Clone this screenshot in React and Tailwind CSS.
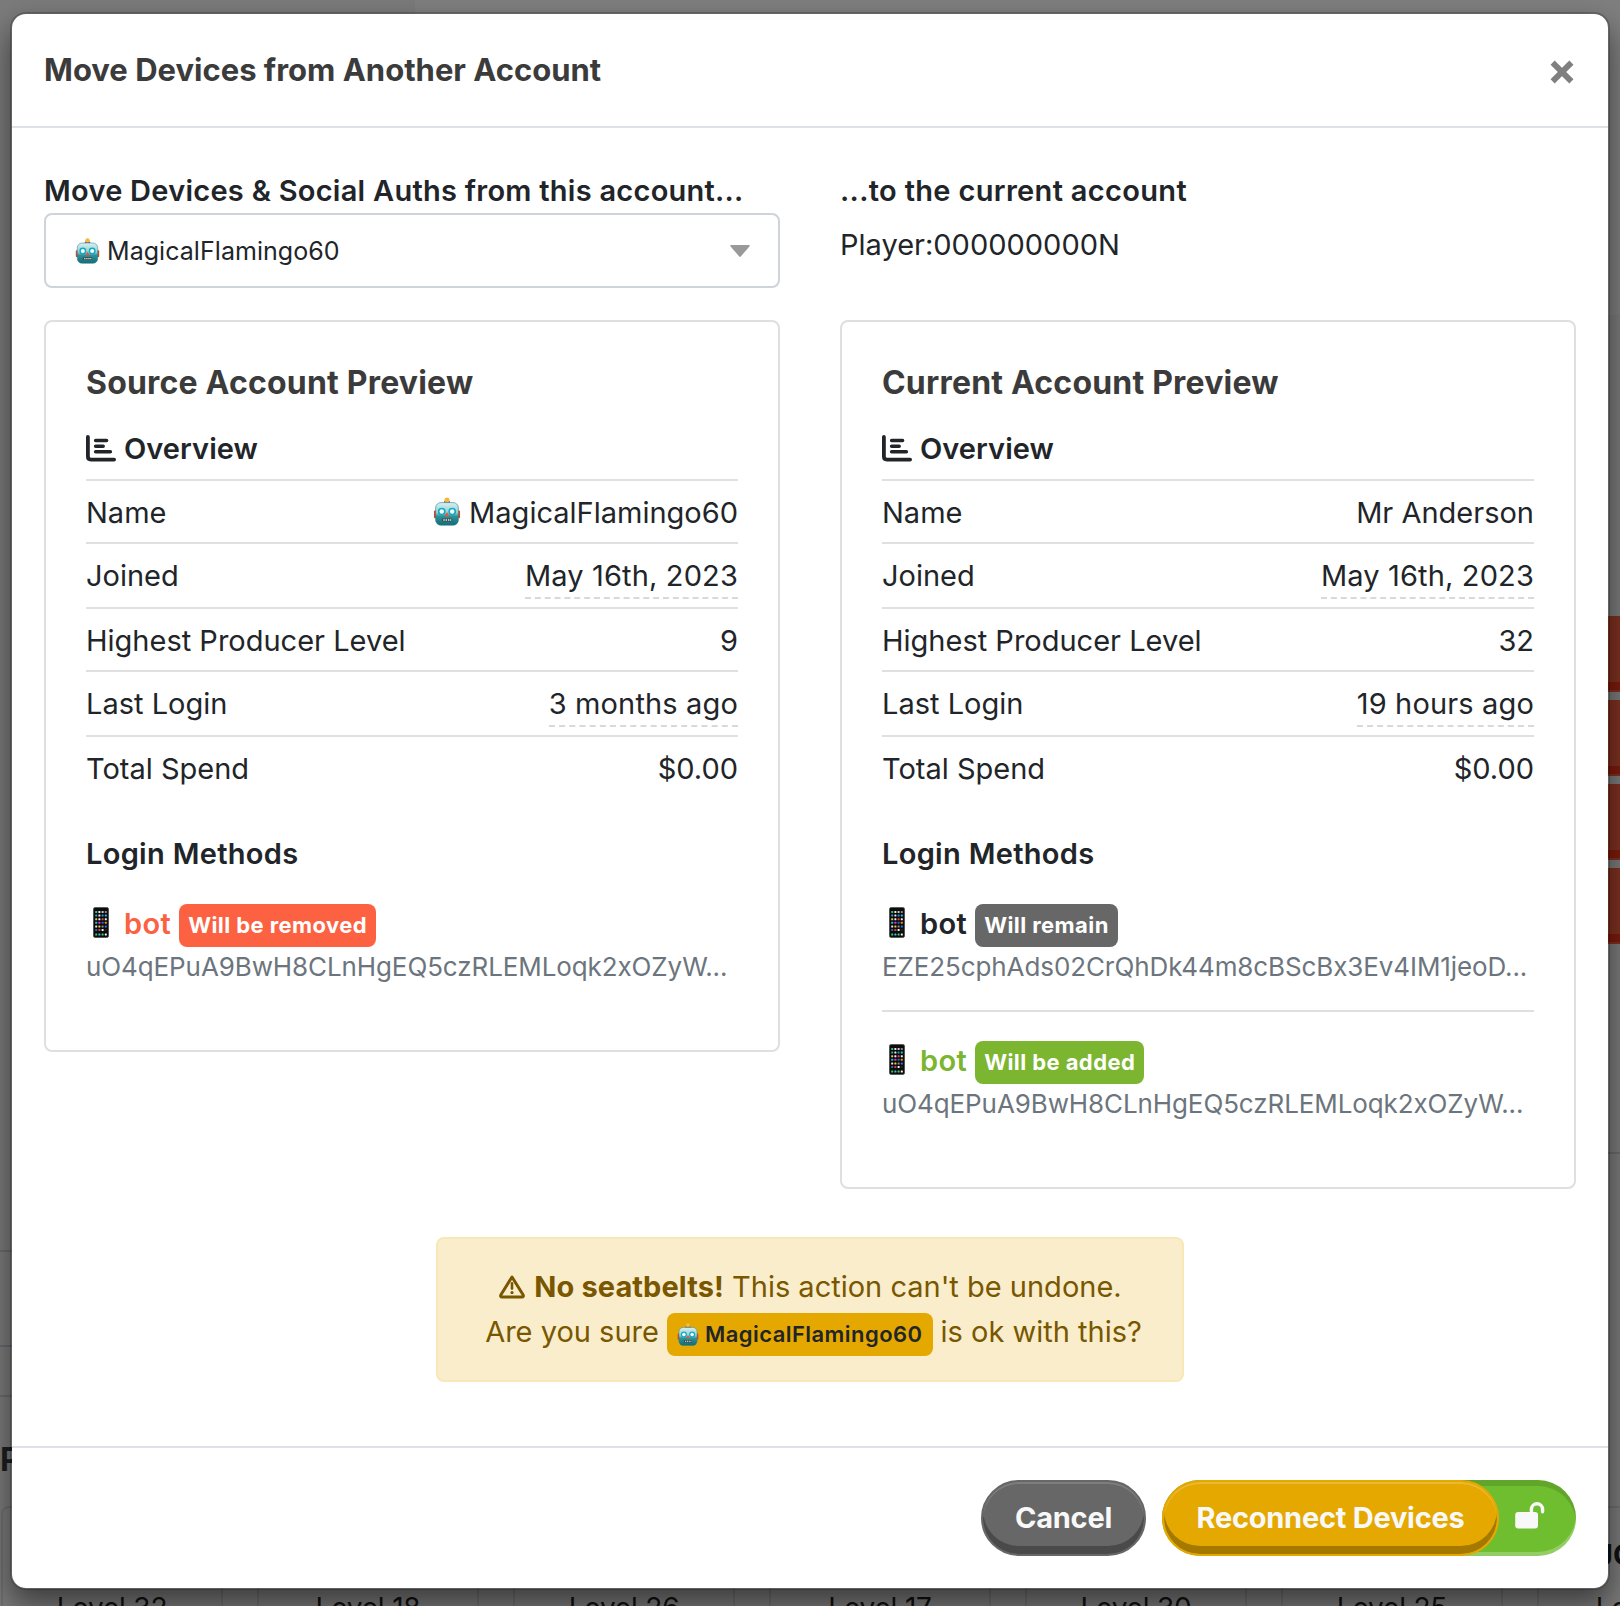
const LEVELS = [32, 18, 26, 17, 30, 25, 21];

const REMOVE_BUTTONS = [0, 1, 2, 3];

const sourceAccount = {
  title: "Source Account Preview",
  rows: [
    { label: "Name", value: "MagicalFlamingo60", robot: true },
    { label: "Joined", value: "May 16th, 2023", dashed: true },
    { label: "Highest Producer Level", value: "9" },
    { label: "Last Login", value: "3 months ago", dashed: true },
    { label: "Total Spend", value: "$0.00" },
  ],
  methods: [
    {
      name: "bot",
      status: "Will be removed",
      text: "text-[#fc6142]",
      badge: "bg-[#fc6142]",
      token: "uO4qEPuA9BwH8CLnHgEQ5czRLEMLoqk2xOZyW...",
    },
  ],
};

const currentAccount = {
  title: "Current Account Preview",
  rows: [
    { label: "Name", value: "Mr Anderson" },
    { label: "Joined", value: "May 16th, 2023", dashed: true },
    { label: "Highest Producer Level", value: "32" },
    { label: "Last Login", value: "19 hours ago", dashed: true },
    { label: "Total Spend", value: "$0.00" },
  ],
  methods: [
    {
      name: "bot",
      status: "Will remain",
      text: "text-[#212529]",
      badge: "bg-[#676767]",
      token: "EZE25cphAds02CrQhDk44m8cBScBx3Ev4IM1jeoD...",
    },
    {
      name: "bot",
      status: "Will be added",
      text: "text-[#7cb52f]",
      badge: "bg-[#7cb52f]",
      token: "uO4qEPuA9BwH8CLnHgEQ5czRLEMLoqk2xOZyW...",
    },
  ],
};

function Robot({ className }) {
  return (
    <svg viewBox="0 0 28 30" className={className}>
      <defs>
        <linearGradient id="head" x1="0" y1="0" x2="0" y2="1">
          <stop offset="0" stopColor="#d9f1f2" />
          <stop offset="0.45" stopColor="#8fcfd3" />
          <stop offset="0.6" stopColor="#2f9299" />
          <stop offset="1" stopColor="#0f6d77" />
        </linearGradient>
      </defs>
      <rect x="0.5" y="14" width="3" height="8" rx="1" fill="#d8412c" />
      <rect x="24.5" y="14" width="3" height="8" rx="1" fill="#d8412c" />
      <rect x="11" y="4" width="6" height="3" rx="1" fill="#6d4a7c" />
      <circle cx="14" cy="3" r="2.6" fill="#f6b83c" />
      <rect x="2.2" y="5.8" width="23.6" height="23.4" rx="5.5" fill="url(#head)" stroke="#2b7f88" strokeWidth="0.6" />
      <circle cx="8.6" cy="15" r="4" fill="#17a9c4" />
      <circle cx="8.6" cy="15" r="2.3" fill="#f4ffff" />
      <circle cx="19.4" cy="15" r="4" fill="#17a9c4" />
      <circle cx="19.4" cy="15" r="2.3" fill="#f4ffff" />
      <path d="M14 15.5 L16.4 20 H11.6 Z" fill="#e4573d" />
      <rect x="8.6" y="22.2" width="10.8" height="3.2" rx="1" fill="#3c4a4d" />
      <path d="M10.2 23.8h1.4M12.6 23.8h1.4M15 23.8h1.4M17.2 23.8h1.2" stroke="#e8eeee" strokeWidth="1.6" />
    </svg>
  );
}

const APP_COLORS = [
  ["#2fd05b", "#e9e9e9", "#c9c9c9", "#8a8a8a"],
  ["#20a7e0", "#e9e9e9", "#2b8de0", "#27c1f0"],
  ["#f3c53c", "#f2f2f2", "#e0483c", "#f0f0f0"],
  ["#28b5e8", "#cf39c9", "#3159d8", "#f28b24"],
  ["#e9e9e9", "#f0cf45", "#8c8c8c", "#2c7be0"],
  ["#2b63c9", "#e23f35", "#f4f4f4", "#222222"],
  ["#2ed15c", "#30c4e8", "#41d06a", "#f4f4f4"],
];

function Phone({ className }) {
  return (
    <svg viewBox="0 0 16 31" className={className}>
      <rect x="0.4" y="0.4" width="15.2" height="30.2" rx="2" fill="#0c0c0c" stroke="#4a4a4a" strokeWidth="0.8" />
      {APP_COLORS.map((line, r) =>
        line.map((fill, c) => (
          <rect
            key={`${r}-${c}`}
            x={2.2 + c * 3.2}
            y={r === 6 ? 26.4 : 4 + r * 3.6}
            width="2"
            height="2"
            rx="0.5"
            fill={fill}
          />
        ))
      )}
    </svg>
  );
}

function CloseIcon() {
  return (
    <svg viewBox="0 0 24 24" className="w-6 h-6">
      <path d="M2.6 2.6L21.4 21.4M21.4 2.6L2.6 21.4" stroke="#7f7f7f" strokeWidth="5.8" />
    </svg>
  );
}

function BarsIcon() {
  return (
    <svg viewBox="0 0 30 27" className="w-[30px] h-[27px] shrink-0" fill="none" stroke="#212529" strokeLinecap="round">
      <path d="M1.9 2V21.6Q1.9 24.6 4.9 24.6H28.1" strokeWidth="3.8" />
      <path d="M9.6 5.6H20.6M9.6 11.2H17.2M9.6 16.8H24.4" strokeWidth="3.5" />
    </svg>
  );
}

function WarningIcon() {
  return (
    <svg viewBox="0 0 26 24" className="w-[26px] h-6 shrink-0" fill="none" stroke="#795700" strokeLinejoin="round">
      <path d="M13 2L24.2 20Q24.8 22 23 22H3Q1.2 22 1.8 20Z" strokeWidth="3" />
      <path d="M13 8.4V13.6" strokeWidth="2.6" strokeLinecap="round" />
      <circle cx="13" cy="17.6" r="1.6" fill="#795700" stroke="none" />
    </svg>
  );
}

function UnlockIcon() {
  return (
    <svg viewBox="0 0 30 27" className="w-[30px] h-[27px]">
      <path d="M16.4 12V7.4a5.6 5.6 0 0 1 11.2 0V9.8" fill="none" stroke="#f8f8f8" strokeWidth="3.4" strokeLinecap="round" />
      <rect x="0.2" y="10" width="22.8" height="16.4" rx="3" fill="#f8f8f8" />
    </svg>
  );
}

function AccountCard({ account }) {
  return (
    <section className="border-2 border-[#dfdfdf] rounded-lg px-10 pt-[42px] pb-16">
      <h3 className="text-[32px] leading-[38px] font-bold text-[#3b3b3b] tracking-[0.2px]">
        {account.title}
      </h3>

      <div className="flex items-center gap-2 mt-[24px] h-[53px] pb-2">
        <BarsIcon />
        <h4 className="font-semibold tracking-[0.05px]">Overview</h4>
      </div>

      <div>
        {account.rows.map((row) => (
          <div
            key={row.label}
            className="flex justify-between items-start border-t-2 border-[#dee0e2] py-2 leading-[47px]"
          >
            <span className="h-[45px]">{row.label}</span>
            <span
              className={
                row.dashed
                  ? "h-[47px] border-b-2 border-dashed border-[#d9d9d9] tracking-[0.15px]"
                  : "h-[45px] flex gap-2"
              }
            >
              {row.robot && <Robot className="w-7 h-[29px] mt-2" />}
              {row.value}
            </span>
          </div>
        ))}
      </div>

      <h4 className="font-semibold tracking-[0.3px] mt-[33px]">Login Methods</h4>

      {account.methods.map((method, index) => (
        <div
          key={index}
          className={
            index > 0
              ? "border-t-2 border-[#dfdfdf] mt-6 pt-[26px]"
              : "mt-[25px]"
          }
        >
          <div className="flex items-start">
            <Phone className="w-4 h-[31px] ml-[7px] mt-[6px]" />
            <span className={`font-semibold tracking-[0.4px] ml-[15px] ${method.text}`}>
              {method.name}
            </span>
            <span
              className={`ml-2 mt-[3px] h-[43px] px-[9px] rounded-lg text-[22px] leading-[43px] tracking-[0.42px] font-bold text-white ${method.badge}`}
            >
              {method.status}
            </span>
          </div>
          <div className="text-[26px] leading-[39px] tracking-[-0.1px] text-[#6c757d] whitespace-nowrap">
            {method.token}
          </div>
        </div>
      ))}
    </section>
  );
}

// Page that stays visible around the edges of the modal
function Backdrop() {
  return (
    <div className="absolute inset-0 bg-[#7b7b7b] overflow-hidden">
      <div className="absolute left-[415px] top-0 right-0 h-[315px] bg-[#7f7f7f]" />
      <div className="absolute left-0 top-[1250px] w-5 h-[2px] bg-[#6b6b6b]" />
      <div className="absolute left-0 top-[1345px] w-5 h-[2px] bg-[#666a70]" />
      <div className="absolute left-0 top-[1395px] w-5 h-[2px] bg-[#6b6b6b]" />
      <div className="absolute right-0 top-[1152px] w-5 h-[2px] bg-[#6b6b6b]" />
      <div className="absolute left-0 top-[1437px] text-[32px] font-bold text-[#1e1e1e]">
        Producers
      </div>
      <div className="absolute right-0 top-[616px] w-5 flex flex-col gap-2">
        {REMOVE_BUTTONS.map((n) => (
          <div key={n} className="h-[76px] bg-[#7e3120] border-b-2 border-[#7e3120] flex items-end">
            <div className="w-full h-2 bg-[#7e1a0c]" />
          </div>
        ))}
      </div>
      <div className="absolute left-px top-[1506px] flex gap-[34px]">
        {LEVELS.map((level) => (
          <div
            key={level}
            className="w-[222px] h-[140px] shrink-0 border-2 border-[#6f6f6f] rounded-lg pt-[78px] text-center text-[28px] tracking-[-0.2px] text-[#111111]"
          >
            Level {level}
          </div>
        ))}
      </div>
      <div className="absolute left-[1596px] top-[1532px] font-bold text-[#111111]">
        JC
      </div>
    </div>
  );
}

export default function App() {
  return (
    <div className="relative w-[1620px] h-[1606px] overflow-hidden font-['Inter',sans-serif] text-[29px] leading-[45px] text-[#212529]">
      <Backdrop />

      <main className="relative mx-[10px] mt-3 h-[1578px] border-2 border-black/20 bg-clip-padding rounded-2xl bg-white shadow-[0_15px_30px_rgba(0,0,0,0.5)] flex flex-col">
        <header className="h-[114px] shrink-0 border-b-2 border-[#dee2e6] flex justify-between items-start px-8">
          <h2 className="mt-[33px] text-[31px] font-bold text-[#3b3b3b]">
            Move Devices from Another Account
          </h2>
          <button className="mt-[46px] mr-[2px]">
            <CloseIcon />
          </button>
        </header>

        <div className="flex-1 px-8 pt-10">
          <div className="grid grid-cols-2 gap-x-[60px]">
            <div>
              <h4 className="font-semibold tracking-[0.26px]">
                Move Devices &amp; Social Auths from this account...
              </h4>
              <div className="h-[75px] border-2 border-[#ced4da] rounded-lg flex items-center pl-[29px] pr-[28px] text-[25px]">
                <Robot className="w-[25px] h-[26px]" />
                <span className="ml-[7px] pt-[2px] flex-1 tracking-[0.05px]">MagicalFlamingo60</span>
                <svg viewBox="0 0 20 12" className="w-5 h-3">
                  <path d="M1 0H19Q20.4 0.4 19.4 1.6L10.8 11.4Q10 12.2 9.2 11.4L0.6 1.6Q-0.4 0.4 1 0Z" fill="#999999" />
                </svg>
              </div>
            </div>
            <div>
              <h4 className="font-semibold tracking-[0.33px]">...to the current account</h4>
              <p className="mt-[9px]">Player:000000000N</p>
            </div>
          </div>

          <div className="grid grid-cols-2 items-start gap-x-[60px] mt-8">
            <AccountCard account={sourceAccount} />
            <AccountCard account={currentAccount} />
          </div>

          <div className="mx-auto mt-12 w-[748px] h-[145px] border-2 border-[#f8e8b8] rounded-lg bg-[#faedcc] text-[#795700] flex flex-col items-center pt-[25px]">
            <p className="flex items-center pl-px">
              <WarningIcon />
              <strong className="ml-[9px] mr-2 font-bold tracking-[0.1px]">No seatbelts!</strong>
              This action can't be undone.
            </p>
            <p className="flex items-start pl-[7px]">
              Are you sure
              <span className="mx-2 mt-1 h-[43px] px-[10px] rounded-lg bg-[#e5a800] flex items-center gap-[6px] text-[22px] tracking-[0.45px] font-semibold text-[#212529]">
                <Robot className="w-[22px] h-[23px]" />
                MagicalFlamingo60
              </span>
              is ok with this?
            </p>
          </div>
        </div>

        <footer className="h-[142px] shrink-0 border-t-2 border-[#dee2e6] flex justify-end gap-4 px-8 pt-8 text-[29px] tracking-[-0.25px] font-bold text-[#f8f8f8]">
          <button className="w-[165px] h-[76px] pb-[2px] rounded-full border-2 border-[#676767] bg-[#676767] shadow-[inset_0_2px_0_rgba(255,255,255,0.15),inset_0_-8px_0_rgba(0,0,0,0.28)]">
            Cancel
          </button>
          <div className="w-[414px] h-[76px] rounded-full bg-[#6fbe30] shadow-[inset_0_6px_0_rgba(0,0,0,0.12),inset_0_-4px_0_rgba(255,255,255,0.25)] flex items-center">
            <button className="w-[337px] h-[76px] pb-[2px] rounded-full border-2 border-[#e5a800] bg-[#e5a800] shadow-[inset_0_2px_0_rgba(255,255,255,0.2),inset_0_-8px_0_rgba(0,0,0,0.28)]">
              Reconnect Devices
            </button>
            <span className="ml-4 mb-[6px]">
              <UnlockIcon />
            </span>
          </div>
        </footer>
      </main>
    </div>
  );
}
